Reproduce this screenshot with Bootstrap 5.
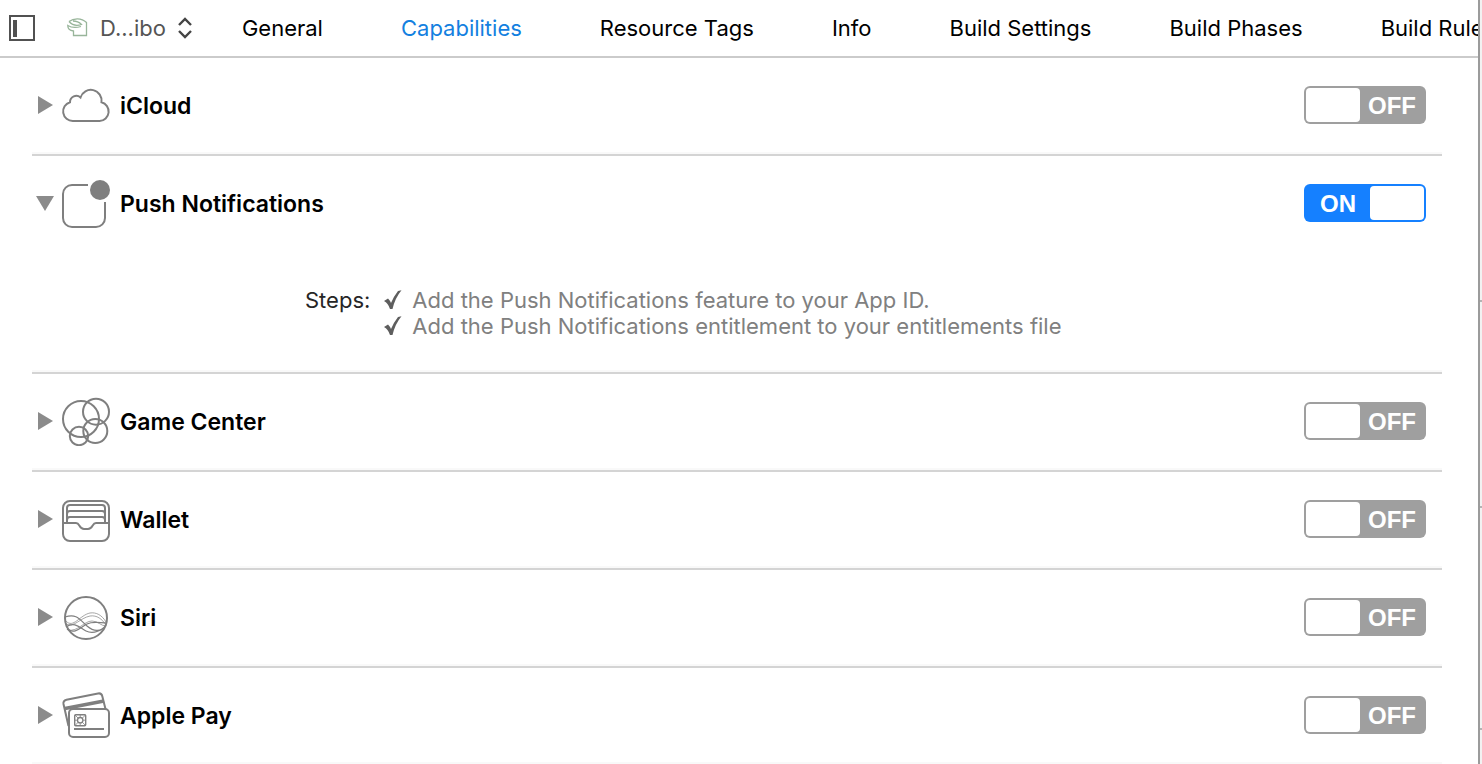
<!DOCTYPE html>
<html lang="en">
<head>
<meta charset="utf-8">
<meta name="viewport" content="width=device-width, initial-scale=1">
<title>Capabilities</title>
<link href="https://cdn.jsdelivr.net/npm/bootstrap@5.3.0/dist/css/bootstrap.min.css" rel="stylesheet">
<style>
body{font-family:Inter,"Liberation Sans",sans-serif;font-size:22px;line-height:26px;color:#000}
.editor{border-right:2px solid #9b9b9b;min-width:0}
.gutter{width:2px;background:#f2f2f2;grid-template-rows:302px 206px 222px 1fr}
.gutter div{border-bottom:2px solid #b4b4b4}
.topbar{height:58px;border-bottom:2px solid #cbcbcb}
.panel-btn{width:26px;height:26px;margin-left:9px;color:#515151}
.target-btn{margin-left:32px;gap:12px;color:#555;font-size:22px;line-height:26px}
.tabs{gap:78px;margin-left:50px}
.tabs a{color:#000;text-decoration:none;white-space:nowrap}
.tabs a.active{color:#1380e0}
.caps{margin:0 36px 0 32px}
.cap{border-bottom:2px solid #d4d4d4;box-shadow:inset 0 -2px #f9f9f9}
.cap-head{height:96px;padding:0 16px 2px 4px}
.tri{width:18px;height:18px;color:#8b8b8b}
.tri[aria-expanded=true] svg{transform:rotate(90deg)}
.cap-icon{width:50px;height:50px;margin:0 9px 0 7px;color:#7f7f7f}
.cap-name{font-weight:600;font-size:23px;line-height:26px;margin:0;padding-top:2px}
.toggle{width:122px;height:38px;border-radius:6px;padding:2px;background:#9f9f9f;color:#fff;font:700 24px/34px "Liberation Sans",sans-serif;cursor:pointer}
.toggle input{appearance:none;width:54px;height:34px;margin:0;border-radius:4px;background:#fff;flex:none}
.toggle span{flex:1;text-align:center;padding-top:1px}
.toggle.on{background:#1580ff;flex-direction:row-reverse}
.steps{padding:35px 0 33px 273px;gap:14px;color:#262626}
.steps li{color:#808080;gap:10px}
.tick{width:18px;height:20px;color:#5e5e5e}
</style>
</head>
<body class="bg-white">
<div class="d-flex vh-100 overflow-hidden">
<main class="editor flex-grow-1 overflow-hidden">
<header class="topbar d-flex align-items-center">
<button class="panel-btn btn p-0 border-0 d-flex flex-shrink-0" aria-label="Toggle target list"><svg width="26" height="26"><rect x="1" y="1" width="24" height="24" fill="none" stroke="currentColor" stroke-width="2"/><path d="M4 5h4v17H4z" fill="currentColor"/></svg></button>
<button class="target-btn btn p-0 border-0 d-flex align-items-center flex-shrink-0"><svg width="21" height="20" fill="none" stroke="#98b59a" stroke-width="1.300"><path d="M2 3.500C6 .5 14-1 19.500 4.500V17.500H6.500V13C2.500 12.500.7 10.500.8 7.500 4 9.500 9 10 14 8.500M2 3.500C5 7 10 8 14.500 6.500 12 4 9 3 6 3"/></svg><span>D...ibo</span><svg width="14" height="22" fill="none" stroke="#444" stroke-width="2.400"><path d="m1 8 6-6 6 6M1 14l6 6 6-6"/></svg></button>
<nav class="tabs d-flex"><a href="#">General</a><a href="#" class="active" aria-current="page">Capabilities</a><a href="#">Resource Tags</a><a href="#">Info</a><a href="#">Build Settings</a><a href="#">Build Phases</a><a href="#">Build Rules</a></nav>
</header>
<div class="caps">
<section class="cap"><div class="cap-head d-flex align-items-center">
<button class="tri btn p-0 border-0 d-flex" aria-expanded="false" aria-label="iCloud details"><svg width="18" height="18"><path d="M2 0v18l15-9z" fill="currentColor"/></svg></button>
<svg class="cap-icon" viewBox="0 0 50 50" fill="none" stroke="currentColor" stroke-width="2"><path d="M12 41A9.600 9.600 0 0 1 9 22.200A6.300 6.300 0 0 1 19.500 17.500A10.800 10.800 0 0 1 40.500 22.300A9.500 9.500 0 0 1 38.500 41Z"/></svg>
<h2 class="cap-name">iCloud</h2><label class="toggle d-flex ms-auto"><input type="checkbox" role="switch" aria-label="iCloud"><span>OFF</span></label></div></section>

<section class="cap"><div class="cap-head d-flex align-items-center">
<button class="tri btn p-0 border-0 d-flex" aria-expanded="true" aria-label="Push Notifications details"><svg width="18" height="18"><path d="M2 0v18l15-9z" fill="currentColor"/></svg></button>
<svg class="cap-icon" viewBox="0 0 50 50" fill="none" stroke="currentColor" stroke-width="2"><path d="M27 7H11a9 9 0 0 0-9 9v24a9 9 0 0 0 9 9h24a9 9 0 0 0 9-9V24"/><circle cx="39" cy="12" r="10" fill="currentColor" stroke="none"/></svg>
<h2 class="cap-name">Push Notifications</h2><label class="toggle on d-flex ms-auto"><input type="checkbox" role="switch" aria-label="Push Notifications" checked><span>ON</span></label></div>
<div class="steps d-flex"><span>Steps:</span><ul class="list-unstyled mb-0">
<li class="d-flex align-items-center"><svg class="tick" viewBox="0 0 18 20"><path d="M0 11 4 8.500q2 2 3 4.500Q10 6 14 1l3.500-.8Q11 8 8.500 19H6Q4 13 0 11Z" fill="currentColor"/></svg><span>Add the Push Notifications feature to your App ID.</span></li>
<li class="d-flex align-items-center"><svg class="tick" viewBox="0 0 18 20"><path d="M0 11 4 8.500q2 2 3 4.500Q10 6 14 1l3.500-.8Q11 8 8.500 19H6Q4 13 0 11Z" fill="currentColor"/></svg><span>Add the Push Notifications entitlement to your entitlements file</span></li></ul></div></section>

<section class="cap"><div class="cap-head d-flex align-items-center">
<button class="tri btn p-0 border-0 d-flex" aria-expanded="false" aria-label="Game Center details"><svg width="18" height="18"><path d="M2 0v18l15-9z" fill="currentColor"/></svg></button>
<svg class="cap-icon" viewBox="0 0 50 50" fill="none" stroke="currentColor" stroke-width="2"><circle cx="20" cy="23" r="18"/><circle cx="35" cy="15.700" r="13"/><circle cx="34.300" cy="35" r="12"/><circle cx="18" cy="40" r="9.200"/></svg>
<h2 class="cap-name">Game Center</h2><label class="toggle d-flex ms-auto"><input type="checkbox" role="switch" aria-label="Game Center"><span>OFF</span></label></div></section>

<section class="cap"><div class="cap-head d-flex align-items-center">
<button class="tri btn p-0 border-0 d-flex" aria-expanded="false" aria-label="Wallet details"><svg width="18" height="18"><path d="M2 0v18l15-9z" fill="currentColor"/></svg></button>
<svg class="cap-icon" viewBox="0 0 50 50" fill="none" stroke="currentColor" stroke-width="2"><rect x="2" y="7" width="46" height="40" rx="7"/><path d="M2 29h13c4 0 3 6 8 6h4c5 0 4-6 8-6h13M6 29V14q0-3 3-3h32q3 0 3 3v15M6 20q0-3 3-3h32q3 0 3 3M6 26q0-3 3-3h32q3 0 3 3"/></svg>
<h2 class="cap-name">Wallet</h2><label class="toggle d-flex ms-auto"><input type="checkbox" role="switch" aria-label="Wallet"><span>OFF</span></label></div></section>

<section class="cap"><div class="cap-head d-flex align-items-center">
<button class="tri btn p-0 border-0 d-flex" aria-expanded="false" aria-label="Siri details"><svg width="18" height="18"><path d="M2 0v18l15-9z" fill="currentColor"/></svg></button>
<svg class="cap-icon" viewBox="0 0 50 50" fill="none" stroke="currentColor"><circle cx="25" cy="26" r="21" stroke-width="2"/><path d="M4 25c12-4 15 3 22 9s14 6 19-1M6 37c8 6 14-2 20-5s13-1 20-1M5 35c9-6 14 1 20 4s12 1 18-3" stroke-width="1.200"/><path d="M5 29c7 8 14-6 24-8 6-1 12 2 16 9M5 32c8 4 14-6 24-8 7-1 12 3 16 9M7 38c10 2 16-9 24-9 6 0 9 5 14 5" stroke-width=".7"/></svg>
<h2 class="cap-name">Siri</h2><label class="toggle d-flex ms-auto"><input type="checkbox" role="switch" aria-label="Siri"><span>OFF</span></label></div></section>

<section class="cap"><div class="cap-head d-flex align-items-center">
<button class="tri btn p-0 border-0 d-flex" aria-expanded="false" aria-label="Apple Pay details"><svg width="18" height="18"><path d="M2 0v18l15-9z" fill="currentColor"/></svg></button>
<svg class="cap-icon" viewBox="0 0 50 50" fill="none" stroke="currentColor" stroke-width="2"><path d="M7.500 36 2.500 14q-.6-3.400 3-4.300L37 3.500q3.500-.7 4.300 2.700L44.500 19"/><path d="m4 18.500 39-7.500" stroke-width="3.600"/><rect x="8" y="19" width="40" height="28" rx="4" fill="#fff"/><path d="M13 39h30"/><rect x="13.700" y="24.700" width="11" height="11" rx="1" stroke-width="1.400"/><circle cx="19.200" cy="30.200" r="2.700" stroke-width="1.300"/><path d="m14 25 3.300 3.300M24.500 25l-3.300 3.300M14 35.500l3.300-3.400M24.500 35.500l-3.300-3.400M19.200 25v2.500M19.200 33v2.500M14 30.200h2.500M22 30.200h2.500" stroke-width=".8"/></svg>
<h2 class="cap-name">Apple Pay</h2><label class="toggle d-flex ms-auto"><input type="checkbox" role="switch" aria-label="Apple Pay"><span>OFF</span></label></div></section>
</div>
</main>
<div class="gutter d-grid flex-shrink-0"><div></div><div></div><div></div></div>
</div>
<script src="https://cdn.jsdelivr.net/npm/bootstrap@5.3.0/dist/js/bootstrap.bundle.min.js"></script>
</body>
</html>
